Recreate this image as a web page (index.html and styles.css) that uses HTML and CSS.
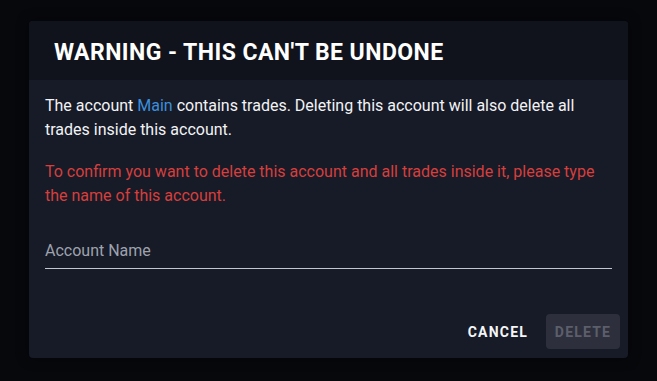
FILE: index.html
```html
<!DOCTYPE html>
<html>
<head>
<meta charset="utf-8">
<link rel="stylesheet" href="styles.css">
</head>
<body>
<div class="backdrop">
  <div class="dialog">
    <div class="dialog-header">WARNING - THIS CAN'T BE UNDONE</div>
    <div class="dialog-body">
      <p class="info">The account <span class="acct">Main</span> contains trades. Deleting this account will also delete all trades inside this account.</p>
      <p class="danger">To confirm you want to delete this account and all trades inside it, please type the name of this account.</p>
      <div class="field">
        <div class="field-label">Account Name</div>
      </div>
    </div>
    <div class="dialog-actions">
      <button class="btn btn-cancel">CANCEL</button>
      <button class="btn btn-delete" disabled>DELETE</button>
    </div>
  </div>
</div>
</body>
</html>
```
FILE: styles.css
```css
html, body {
  margin: 0;
  padding: 0;
  background: #07080c;
  font-family: Roboto, "Liberation Sans", sans-serif;
}
.backdrop {
  width: 657px;
  height: 381px;
  display: flex;
  justify-content: center;
  padding-top: 21px;
  box-sizing: border-box;
}
.dialog {
  width: 599px;
  height: 337px;
  background: #171a27;
  border-radius: 4px;
  display: flex;
  flex-direction: column;
  overflow: hidden;
  box-shadow: 0 0 12px rgba(0,0,0,0.5);
}
.dialog-header {
  height: 59px;
  background: #10131c;
  color: #fff;
  font-size: 23px;
  font-weight: 700;
  letter-spacing: 0.45px;
  padding-left: 25px;
  display: flex;
  align-items: center;
  box-sizing: border-box;
  padding-top: 3px;
}
.dialog-body {
  padding: 14px 16px 0 16px;
  flex: 1;
}
.info {
  margin: 0;
  color: #f2f3f5;
  font-size: 16px;
  line-height: 24px;
}
.acct { color: #3b8fdb; }
.danger {
  margin: 18px 0 0 0;
  color: #d63f3c;
  font-size: 16px;
  line-height: 24px;
}
.field {
  margin-top: 33px;
  border-bottom: 1px solid #c3c6cf;
  padding-bottom: 7px;
}
.field-label {
  color: #9ea2ad;
  font-size: 16px;
  line-height: 20px;
}
.dialog-actions {
  display: flex;
  justify-content: flex-end;
  align-items: center;
  gap: 10px;
  padding: 0 8px 9px 0;
}
.btn {
  font-family: Roboto, "Liberation Sans", sans-serif;
  font-weight: 700;
  font-size: 14px;
  letter-spacing: 1.2px;
  border: none;
  border-radius: 4px;
  height: 35px;
  padding: 0 8px;
  background: transparent;
}
.btn-cancel { color: #f4f5f7; }
.btn-delete {
  background: #2d303c;
  color: #5c5f6b;
  width: 74px;
}
```
